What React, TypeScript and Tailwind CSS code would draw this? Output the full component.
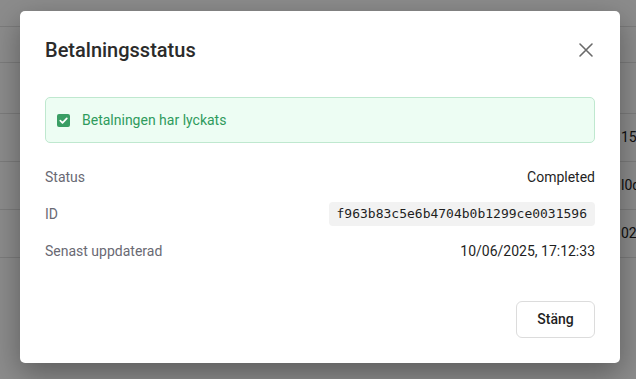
import React from 'react';

const rows = [
  { top: true, text: '' },
  { top: false, text: '' },
  { top: false, text: '159a2c7e' },
  { top: false, text: 'l0d8e4f1' },
  { top: false, text: '0221b6c9' },
];

const BackgroundTable: React.FC = () => (
  <div className="min-h-[379px] bg-white pt-[26px] text-[14px] text-[#222]">
    <div className="border-t border-[#e2e2e2]">
      <div className="h-[36px] border-b border-[#e2e2e2]" />
      <div className="h-[51px] border-b border-[#e2e2e2]" />
      {rows.slice(2).map((row, i) => (
        <div key={i} className="flex h-[48px] items-center border-b border-[#e2e2e2]">
          <div className="w-[621px] shrink-0" />
          <span className="whitespace-nowrap">{row.text}</span>
        </div>
      ))}
    </div>
  </div>
);

const CheckIcon: React.FC = () => (
  <svg width="13" height="13" viewBox="0 0 13 13" className="shrink-0">
    <rect x="0" y="0" width="13" height="13" rx="2" fill="#3a9e64" />
    <path d="M3.3 6.7 L5.5 8.8 L9.8 4.3" fill="none" stroke="#fff" strokeWidth="1.7" strokeLinecap="round" strokeLinejoin="round" />
  </svg>
);

const CloseIcon: React.FC = () => (
  <svg width="16" height="16" viewBox="0 0 16 16">
    <path d="M2 2 L14 14 M14 2 L2 14" stroke="#6a6a6a" strokeWidth="1.6" strokeLinecap="round" />
  </svg>
);

export default function App() {
  return (
    <div className="relative h-[379px] w-[636px] overflow-hidden font-['Roboto','Liberation_Sans',sans-serif]">
      <BackgroundTable />

      {/* Overlay + modal */}
      <div className="absolute inset-0 bg-black/45 pl-[20px] pt-[11px]">
        <div className="w-[600px] rounded-[5px] bg-white px-[25px] pt-[25px] pb-[25px] shadow-[0_10px_30px_rgba(0,0,0,0.35)]">
          <div className="flex items-center justify-between">
            <h2 className="text-[20px] leading-[28px] font-medium text-[#2b2b2b]">Betalningsstatus</h2>
            <button className="mr-[-1px] flex h-[20px] w-[20px] items-center justify-center">
              <CloseIcon />
            </button>
          </div>

          <div className="mt-[33px] flex h-[46px] items-center gap-[12px] rounded-[5px] border border-[#bfe8cf] bg-[#edfdf3] pl-[11px]">
            <CheckIcon />
            <span className="text-[14px] text-[#2f9b5c]">Betalningen har lyckats</span>
          </div>

          <div className="mt-[22px] flex flex-col gap-[13px] text-[14px]">
            <div className="flex h-[24px] items-center justify-between">
              <span className="text-[#696973]">Status</span>
              <span className="text-[#1f1f1f]">Completed</span>
            </div>
            <div className="flex h-[24px] items-center justify-between">
              <span className="text-[#696973]">ID</span>
              <code className="flex h-[24px] items-center rounded-[4px] bg-[#f2f2f2] px-[8px] font-['DejaVu_Sans_Mono',monospace] text-[13px] text-[#1f1f1f]">
                f963b83c5e6b4704b0b1299ce0031596
              </code>
            </div>
            <div className="flex h-[24px] items-center justify-between">
              <span className="text-[#696973]">Senast uppdaterad</span>
              <span className="text-[#1f1f1f]">10/06/2025, 17:12:33</span>
            </div>
          </div>

          <div className="mt-[38px] flex justify-end">
            <button className="h-[37px] w-[79px] rounded-[6px] border border-[#dcdcdc] bg-white text-[14px] font-medium text-[#1f1f1f]">
              Stäng
            </button>
          </div>
        </div>
      </div>
    </div>
  );
}
